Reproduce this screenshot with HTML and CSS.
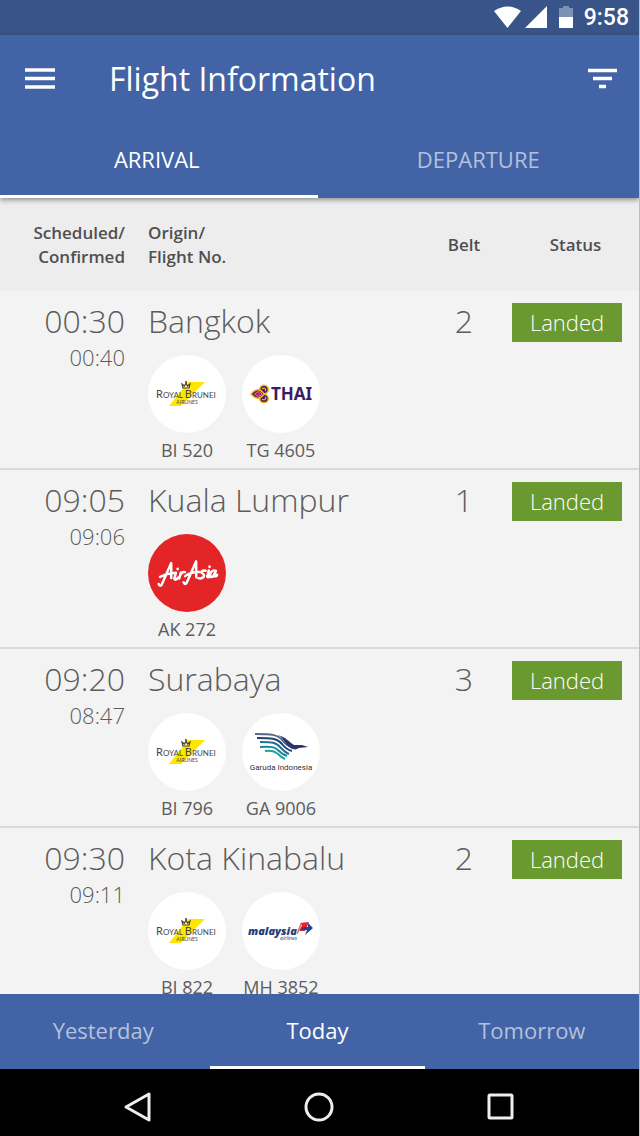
FILE: index.html
```html
<!DOCTYPE html>
<html lang="en">
<head>
<meta charset="utf-8">
<meta name="viewport" content="width=device-width, initial-scale=1">
<title>Flight Information</title>
<link rel="stylesheet" href="styles.css">
</head>
<body>
<svg class="sprites" aria-hidden="true">
  <symbol id="royal-brunei" viewBox="0 0 78 78">
    <path d="M40 27H57L33 51H21Z" fill="#ffe600"/>
    <path d="M35 33L34 29L36.500 31L38 28L39.500 31L42 29L41 33Z" fill="#fff3a0" stroke="#4a4030" stroke-width="1.200"/>
    <circle cx="38" cy="27" r="1" fill="#4a4030"/>
    <text x="8" y="43" class="logo-brunei"><tspan class="logo-brunei-cap">R</tspan>OYAL <tspan class="logo-brunei-cap">B</tspan>RUNEI</text>
    <text x="39" y="49" text-anchor="middle" class="logo-brunei-sub">AIRLINES</text>
  </symbol>
  <symbol id="thai" viewBox="0 0 78 78">
    <g fill="#3c1b66" stroke="#f6b425" stroke-width="1.500">
      <circle cx="22" cy="34.500" r="4.300"/>
      <circle cx="22" cy="43.500" r="4.300"/>
      <path d="M9 39C13 34 18 33 22 39C18 45 13 44 9 39Z"/>
    </g>
    <path d="M12.500 39C15 36 18 36 20 39C18 42 15 42 12.500 39Z" fill="#c2188f" stroke="#f6b425" stroke-width="0.800"/>
    <path d="M20 34C22 32 25 34 23 36M20 44C22 46 25 44 23 42" fill="none" stroke="#f6b425" stroke-width="1.200"/>
    <text x="29" y="45" class="logo-thai">THAI</text>
  </symbol>
  <symbol id="airasia" viewBox="0 0 78 78">
    <g transform="rotate(-4 39 40)" fill="none" stroke="#fff" stroke-width="2.500" stroke-linecap="round" stroke-linejoin="round">
      <path d="M10 48Q12 52 14 47L24 28L23 43M12 41Q19 38 28 38M28 38L26 44Q27 46 30 43M30 34V34.500M33 38L31 44M32 41Q34 37 37 38"/>
      <path d="M35 48Q37 52 39 47L49 28L48 44M37 42Q43 38 52 39M58 38Q53 37 54 40Q58 43 54 45Q52 46 50 45M61 38L59 44Q60 46 62 43M62 34V34.500M68 39Q64 37 62 42Q62 46 65 44L68 39L66 44Q68 45 69 43"/>
    </g>
  </symbol>
  <symbol id="garuda" viewBox="0 0 78 78">
    <g fill="none" stroke-width="2">
      <path d="M13 21C28 21 36 21 41 28C44 32 48 34 52 35" stroke="#526b85"/>
      <path d="M15 25C29 25 35 25 40 31C43 35 46 37 50 38" stroke="#253e78"/>
      <path d="M18 29C30 29 34 29 39 35C42 38 44 40 47 41" stroke="#24718e"/>
      <path d="M18 34C30 33 33 34 37 38C40 41 42 42 45 43" stroke="#16899a"/>
      <path d="M23 38C31 37 33 39 36 41C38 43 40 45 43 46" stroke="#18a5a0"/>
    </g>
    <path d="M36 22C44 24 47 29 52 32H60L66 34L57 35C53 38 49 36 45 32C42 28 40 24 36 22Z" fill="#29356f"/>
    <text x="39" y="57" text-anchor="middle" class="logo-garuda">Garuda Indonesia</text>
  </symbol>
  <symbol id="malaysia" viewBox="0 0 78 78">
    <text x="6" y="43" class="logo-malaysia">malaysia</text>
    <text x="38" y="48" class="logo-malaysia-sub">airlines</text>
    <path d="M58 31L67 30L63 39H57L60 33Z" fill="#e22330"/>
    <path d="M66 31L71 36L63 43L65 38H59L61 35H66Z" fill="#20458f"/>
    <path d="M59 32L55 42" stroke="#e86a6a" stroke-width="1.500"/>
  </symbol>
</svg>

<div class="status-bar">
  <svg class="status-icons" viewBox="0 0 82 24" aria-hidden="true">
    <path d="M0 5Q13.500-4 27 5L13.500 22Z" fill="#fff"/>
    <path d="M31 22L53 0V22Z" fill="#fff"/>
    <path d="M65 2H69V0H75V2H79V11H65Z" fill="#7d90b5"/>
    <path d="M65 11H79V22H65Z" fill="#fff"/>
  </svg>
  <time class="clock">9:58</time>
</div>

<header class="app-header">
  <div class="toolbar">
    <button class="icon-button" type="button" aria-label="Menu">
      <svg width="30" height="22" viewBox="0 0 30 22"><path d="M0 2H30M0 10.500H30M0 19H30" stroke="#fff" stroke-width="3.300"/></svg>
    </button>
    <h1 class="title">Flight Information</h1>
    <button class="icon-button" type="button" aria-label="Filter">
      <svg width="30" height="22" viewBox="0 0 30 22"><path d="M0 2.500H29M5 10.500H24M11 18.500H18" stroke="#fff" stroke-width="3.300"/></svg>
    </button>
  </div>
  <nav class="tabs tabs-direction">
    <button class="tab active" type="button">ARRIVAL</button>
    <button class="tab" type="button">DEPARTURE</button>
  </nav>
</header>

<main class="content">
  <table class="flights">
    <colgroup><col class="col-time"><col><col class="col-belt"><col class="col-status"></colgroup>
    <thead>
      <tr><th class="time">Scheduled/<br>Confirmed</th><th class="origin">Origin/<br>Flight No.</th><th>Belt</th><th>Status</th></tr>
    </thead>
    <tbody>
      <tr>
        <td class="time"><div class="primary">00:30</div><div class="confirmed">00:40</div></td>
        <td><div class="primary">Bangkok</div>
          <div class="carriers">
            <div class="carrier"><svg class="logo"><use href="#royal-brunei"/></svg><span>BI 520</span></div>
            <div class="carrier"><svg class="logo"><use href="#thai"/></svg><span>TG 4605</span></div>
          </div></td>
        <td class="belt"><div class="primary">2</div></td>
        <td class="status"><div class="badge">Landed</div></td>
      </tr>
      <tr>
        <td class="time"><div class="primary">09:05</div><div class="confirmed">09:06</div></td>
        <td><div class="primary">Kuala Lumpur</div>
          <div class="carriers">
            <div class="carrier"><svg class="logo logo-red"><use href="#airasia"/></svg><span>AK 272</span></div>
          </div></td>
        <td class="belt"><div class="primary">1</div></td>
        <td class="status"><div class="badge">Landed</div></td>
      </tr>
      <tr>
        <td class="time"><div class="primary">09:20</div><div class="confirmed">08:47</div></td>
        <td><div class="primary">Surabaya</div>
          <div class="carriers">
            <div class="carrier"><svg class="logo"><use href="#royal-brunei"/></svg><span>BI 796</span></div>
            <div class="carrier"><svg class="logo"><use href="#garuda"/></svg><span>GA 9006</span></div>
          </div></td>
        <td class="belt"><div class="primary">3</div></td>
        <td class="status"><div class="badge">Landed</div></td>
      </tr>
      <tr>
        <td class="time"><div class="primary">09:30</div><div class="confirmed">09:11</div></td>
        <td><div class="primary">Kota Kinabalu</div>
          <div class="carriers">
            <div class="carrier"><svg class="logo"><use href="#royal-brunei"/></svg><span>BI 822</span></div>
            <div class="carrier"><svg class="logo"><use href="#malaysia"/></svg><span>MH 3852</span></div>
          </div></td>
        <td class="belt"><div class="primary">2</div></td>
        <td class="status"><div class="badge">Landed</div></td>
      </tr>
    </tbody>
  </table>
</main>

<footer class="day-bar">
  <nav class="tabs tabs-day">
    <button class="tab" type="button">Yesterday</button>
    <button class="tab active" type="button">Today</button>
    <button class="tab" type="button">Tomorrow</button>
  </nav>
</footer>

<nav class="system-nav">
  <button type="button" aria-label="Back"><svg width="32" height="32" viewBox="0 0 32 32"><path d="M4 16L27 3V29Z"/></svg></button>
  <button type="button" aria-label="Home"><svg width="32" height="32" viewBox="0 0 32 32"><circle cx="15" cy="16" r="13"/></svg></button>
  <button type="button" aria-label="Recent apps"><svg width="32" height="32" viewBox="0 0 32 32"><rect x="4" y="4" width="23" height="23" rx="1"/></svg></button>
</nav>
</body>
</html>
```
FILE: styles.css
```css
* { box-sizing: border-box; }

body {
  margin: 0;
  height: 100vh;
  display: flex;
  flex-direction: column;
  overflow: hidden;
  border-right: 1px solid #a6c0ec;
  background: #f3f3f3;
  color: #5c5c5c;
  font-family: "Open Sans", "Noto Sans", sans-serif;
}

button {
  margin: 0;
  padding: 0;
  border: 0;
  background: none;
  color: inherit;
  font: inherit;
}

svg { display: block; }
.sprites { display: none; }

.status-bar {
  flex: none;
  height: 35px;
  padding: 0 10px;
  display: flex;
  justify-content: flex-end;
  align-items: center;
  gap: 8px;
  background: #395488;
}
.status-icons { width: 82px; height: 24px; }
.clock {
  color: #fff;
  font: 500 23px/32px Roboto, sans-serif;
}

.app-header {
  flex: none;
  position: relative;
  background: #4263a6;
  color: #fff;
  box-shadow: 0 2px 5px rgba(0, 0, 0, 0.4);
}
.toolbar {
  height: 88px;
  padding: 0 21px 0 25px;
  display: flex;
  align-items: center;
}
.title {
  flex: 1;
  margin: 0 0 0 54px;
  font-size: 32px;
  line-height: 44px;
  font-weight: 400;
}

.tabs {
  display: grid;
  grid-auto-flow: column;
  grid-auto-columns: 1fr;
  margin-left: -4px;
}
.tab {
  height: 75px;
  border: solid transparent;
  border-width: 0 0 3px;
  color: #b3c1dc;
  font-size: 22px;
  line-height: 32px;
}
.tab.active { color: #fff; border-bottom-color: #fff; }

.content { flex: 1; min-height: 0; overflow: hidden; }

.flights {
  width: 100%;
  table-layout: fixed;
  border-spacing: 0;
}
.col-time { width: 148px; }
.col-belt { width: 96px; }
.col-status { width: 127px; }

th {
  height: 93px;
  padding: 0;
  background: #ededed;
  color: #505050;
  font-size: 17px;
  line-height: 24px;
  font-weight: 600;
}
td {
  padding: 10px 0 6px;
  border-bottom: 2px solid #dadada;
  vertical-align: top;
}
.time { padding-right: 23px; text-align: right; }
.origin { text-align: left; }
.belt { text-align: center; }
.status { padding-top: 12px; }

.primary {
  font-size: 32px;
  line-height: 40px;
  font-weight: 300;
}
.confirmed {
  font-size: 22px;
  line-height: 32px;
  font-weight: 300;
}
.carriers { display: flex; gap: 16px; margin-top: 14px; }
.carrier {
  width: 78px;
  display: flex;
  flex-direction: column;
  align-items: center;
  gap: 5px;
  font-size: 18px;
  line-height: 24px;
  white-space: nowrap;
}
.logo {
  width: 78px;
  height: 78px;
  border-radius: 50%;
  background: #fff;
}
.logo-red { background: #e32528; }
.badge {
  width: 110px;
  background: #69992f;
  color: #fff;
  font-size: 22px;
  line-height: 39px;
  font-weight: 300;
  text-align: center;
}

.logo-brunei { font: 8px Lato, sans-serif; fill: #4a4545; }
.logo-brunei-cap { font-size: 11px; }
.logo-brunei-sub { font: 5px Lato, sans-serif; fill: #4a4545; }
.logo-thai { font: 700 17px "Noto Sans", sans-serif; fill: #3c1b66; }
.logo-garuda { font: 8px Roboto, sans-serif; fill: #333; }
.logo-malaysia { font: italic 800 11px "Open Sans", sans-serif; fill: #263c78; }
.logo-malaysia-sub { font: italic 600 5px "Open Sans", sans-serif; fill: #536896; }

.day-bar { flex: none; overflow: hidden; background: #4263a6; }

.system-nav {
  flex: none;
  height: 67px;
  padding: 22px 122px 0;
  display: flex;
  justify-content: space-between;
  align-items: flex-start;
  background: #000;
}
.system-nav svg { fill: none; stroke: #eee; stroke-width: 3; stroke-linejoin: round; }
```
